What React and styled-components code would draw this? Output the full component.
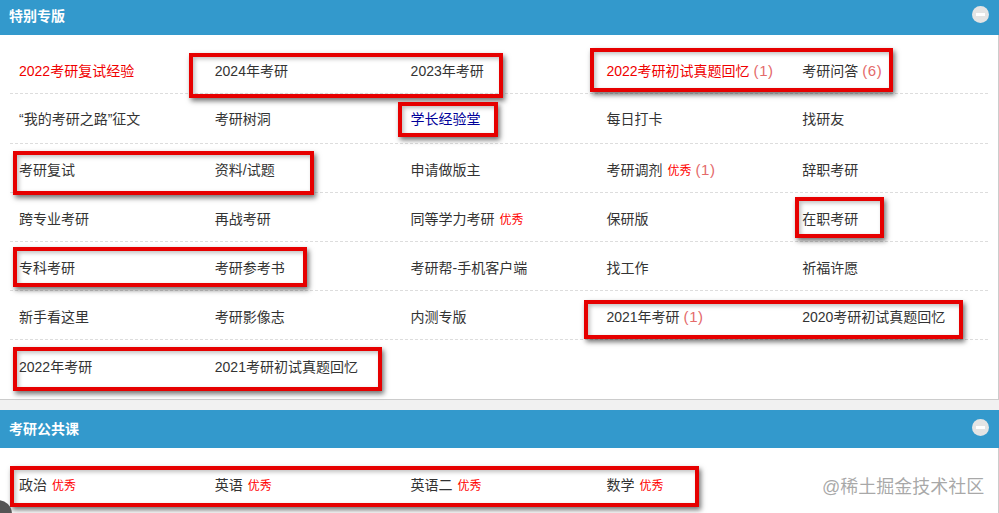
import React from "react";
import styled, { createGlobalStyle } from "styled-components";

const GlobalStyle = createGlobalStyle`
  html, body {
    margin: 0;
    padding: 0;
    background: #f1f1f1;
  }
  body {
    font-family: "Liberation Sans", "Noto Sans CJK SC", sans-serif;
    font-size: 14px;
    color: #333;
  }
`;

const Page = styled.div`
  position: relative;
  width: 999px;
  height: 513px;
  overflow: hidden;
`;

const Panel = styled.section`
  margin-top: ${(p) => p.$top || 0}px;
  margin-bottom: 10px;
`;

const PanelHeader = styled.div`
  height: 38px;
  box-sizing: border-box;
  padding: 0 10px 2px 9px;
  background: #3399cc;
  display: flex;
  align-items: center;
  justify-content: space-between;
  color: #fff;
  font-size: 14px;
  font-weight: 700;
`;

const Collapse = styled.span`
  width: 17px;
  height: 17px;
  margin-top: -2px;
  border-radius: 50%;
  background: #e4e4e4;
  display: flex;
  align-items: center;
  justify-content: center;

  &::before {
    content: "";
    width: 9px;
    height: 3px;
    background: #fff;
  }
`;

const PanelBody = styled.div`
  background: #fff;
  padding: 10px 10px ${(p) => p.$bottom}px 10px;
  border-right: 1px solid #ccc;
  border-bottom: ${(p) => (p.$closed ? "1px solid #ccc" : "0")};
`;

const Row = styled.div`
  display: grid;
  grid-template-columns: repeat(5, 195.8px);
  height: ${(p) => (p.$tall ? 50 : 49)}px;
  padding-bottom: ${(p) => (p.$tall ? 3 : 0)}px;
  box-sizing: border-box;
  align-items: center;
  border-bottom: ${(p) => (p.$last ? "0" : "1px dashed #ddd")};
`;

const Cell = styled.div`
  padding: 2px 0 0 9px;
  white-space: nowrap;
  color: ${(p) => p.$color || "#333"};
`;

const Count = styled.span`
  color: #e46a6a;
  font-size: 15px;
  letter-spacing: 0.6px;
  margin-left: 4px;
`;

const Badge = styled.span`
  color: #f00;
  font-size: 12px;
  margin-left: 5px;
`;

const Annotation = styled.div`
  position: absolute;
  left: ${(p) => p.$x}px;
  top: ${(p) => p.$y}px;
  width: ${(p) => p.$w}px;
  height: ${(p) => p.$h}px;
  box-sizing: border-box;
  border: 4px solid #e60000;
  box-shadow: 2px 3px 5px rgba(0, 0, 0, 0.55), inset 2px 2px 4px rgba(0, 0, 0, 0.25);
`;

const CornerMark = styled.div`
  position: absolute;
  left: -16px;
  top: 500px;
  width: 28px;
  height: 28px;
  border-radius: 50%;
  background: #555;
`;

const Watermark = styled.div`
  position: absolute;
  left: 822px;
  top: 475px;
  font-size: 18px;
  line-height: 24px;
  color: rgba(140, 140, 140, 0.75);
  white-space: nowrap;
`;

const RED = "#f00000";

const specialRows = [
  [
    { text: "2022考研复试经验", color: RED },
    { text: "2024年考研" },
    { text: "2023年考研" },
    { text: "2022考研初试真题回忆", color: RED, count: 1 },
    { text: "考研问答", count: 6 },
  ],
  [
    { text: "“我的考研之路”征文" },
    { text: "考研树洞" },
    { text: "学长经验堂", color: "#000099" },
    { text: "每日打卡" },
    { text: "找研友" },
  ],
  [
    { text: "考研复试" },
    { text: "资料/试题" },
    { text: "申请做版主" },
    { text: "考研调剂", good: true, count: 1 },
    { text: "辞职考研" },
  ],
  [
    { text: "跨专业考研" },
    { text: "再战考研" },
    { text: "同等学力考研", good: true },
    { text: "保研版" },
    { text: "在职考研" },
  ],
  [
    { text: "专科考研" },
    { text: "考研参考书" },
    { text: "考研帮-手机客户端" },
    { text: "找工作" },
    { text: "祈福许愿" },
  ],
  [
    { text: "新手看这里" },
    { text: "考研影像志" },
    { text: "内测专版" },
    { text: "2021年考研", count: 1 },
    { text: "2020考研初试真题回忆" },
  ],
  [{ text: "2022年考研" }, { text: "2021考研初试真题回忆" }],
];

const publicRows = [
  [
    { text: "政治", good: true },
    { text: "英语", good: true },
    { text: "英语二", good: true },
    { text: "数学", good: true },
  ],
];

const boxes = [
  [189, 53, 314, 45],
  [398, 102, 100, 35],
  [590, 48, 303, 44],
  [13, 151, 301, 44],
  [795, 197, 89, 41],
  [13, 247, 294, 40],
  [584, 300, 379, 39],
  [13, 347, 369, 44],
  [10, 466, 689, 41],
];

function Forums({ rows }) {
  return rows.map((row, i) => (
    <Row key={i} $tall={i === 1} $last={i === rows.length - 1}>
      {row.map((item) => (
        <Cell key={item.text} $color={item.color}>
          {item.text}
          {item.good && <Badge>优秀</Badge>}
          {item.count && <Count>({item.count})</Count>}
        </Cell>
      ))}
    </Row>
  ));
}

export default function App() {
  return (
    <Page>
      <GlobalStyle />
      <Panel $top={-3}>
        <PanelHeader>
          特别专版
          <Collapse />
        </PanelHeader>
        <PanelBody $bottom={10} $closed>
          <Forums rows={specialRows} />
        </PanelBody>
      </Panel>
      <Panel>
        <PanelHeader>
          考研公共课
          <Collapse />
        </PanelHeader>
        <PanelBody $bottom={20}>
          <Forums rows={publicRows} />
        </PanelBody>
      </Panel>
      {boxes.map(([x, y, w, h]) => (
        <Annotation key={`${x}-${y}`} $x={x} $y={y} $w={w} $h={h} />
      ))}
      <CornerMark />
      <Watermark>@稀土掘金技术社区</Watermark>
    </Page>
  );
}
